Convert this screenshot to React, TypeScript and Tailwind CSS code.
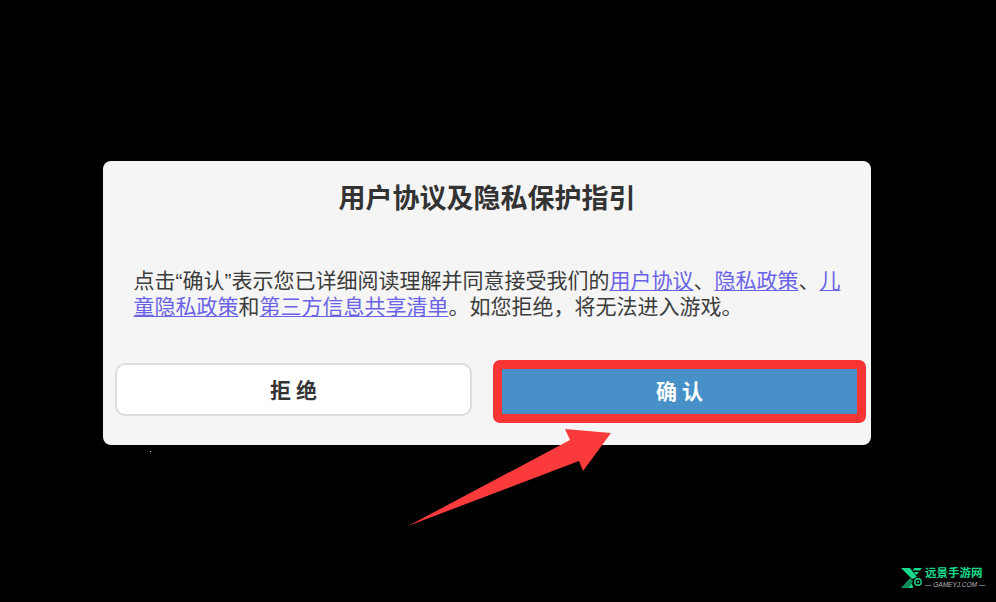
const font = { fontFamily: '"Noto Sans CJK SC", "Liberation Sans", sans-serif' };
const latin = { fontFamily: '"Liberation Sans", sans-serif' };

function Link({ children }: { children: string }) {
  return <span className="text-[#6a63e8] underline underline-offset-2 decoration-1">{children}</span>;
}

export default function App() {
  return (
    <div className="relative w-[996px] h-[602px] bg-black overflow-hidden flex items-start pt-[161px] pl-[103px]" style={font}>
      <div className="w-[768px] h-[284px] bg-[#f5f5f5] rounded-[8px] flex flex-col">
        <h1 className="mt-[18px] h-[36px] leading-[36px] text-center text-[27px] font-bold text-[#333333]">用户协议及隐私保护指引</h1>
        <p className="mt-[52px] ml-[30.5px] w-[717px] text-[21px] leading-[24px] text-[#3c3c3c] break-all">
          点击<span style={latin}>“</span>确认<span style={latin}>”</span>表示您已详细阅读理解并同意接受我们的<Link>用户协议</Link>、<Link>隐私政策</Link>、<Link>儿童隐私政策</Link>和<Link>第三方信息共享清单</Link>。如您拒绝，将无法进入游戏。
        </p>
        <div className="mt-[46px] ml-[12px] flex items-start">
          <button className="w-[357px] h-[53px] pl-[5px] bg-white border-2 border-[#dddddd] rounded-[10px] text-[21px] font-bold text-[#333333] tracking-[5px]">拒绝</button>
          <div className="ml-[21px] -mt-[3px] w-[373px] h-[63px] border-[9px] border-[#f93434] rounded-[7px] bg-[#f93434]">
            <button className="w-full h-full pl-[5px] pb-[2px] bg-[#4790c8] text-[21px] font-bold text-white tracking-[5px]">确认</button>
          </div>
        </div>
      </div>

      <svg className="absolute left-0 top-0 pointer-events-none" width="996" height="602" viewBox="0 0 996 602">
        <polygon points="408,526 570,440 565,429 611,433 583,471 579,461" fill="#fb3b3b" />
        <circle cx="150.5" cy="451.5" r="0.6" fill="#ffffff" />
      </svg>

      <div className="absolute left-[900px] top-[566px] flex items-start gap-[3px]">
        <svg width="22" height="22" viewBox="0 0 22 22">
          <path d="M1 2 H10 L17 11 L12 13 Z" fill="#19d98b" />
          <path d="M14 2 H22 L20 4.5 H13 Z" fill="#19d98b" />
          <path d="M14 6 H19 L17 8.5 H15.5 Z" fill="#19d98b" />
          <path d="M1 22 L10 12 L13 15 L8 22 Z" fill="#0f8f5b" />
          <path d="M8 22 L12 17 L13 22 Z" fill="#19d98b" />
          <circle cx="18" cy="16" r="3.2" fill="none" stroke="#19d98b" strokeWidth="1.4" />
          <circle cx="18" cy="16" r="1.1" fill="#19d98b" />
        </svg>
        <div className="flex flex-col items-start -mt-[1px]">
          <span className="text-[11.5px] leading-[14px] font-bold text-[#19d98b] whitespace-nowrap">远景手游网</span>
          <span className="mt-[2px] text-[6.5px] leading-[8px] italic text-[#b8b8b8] whitespace-nowrap" style={latin}>— GAMEYJ.COM —</span>
        </div>
      </div>
    </div>
  );
}
